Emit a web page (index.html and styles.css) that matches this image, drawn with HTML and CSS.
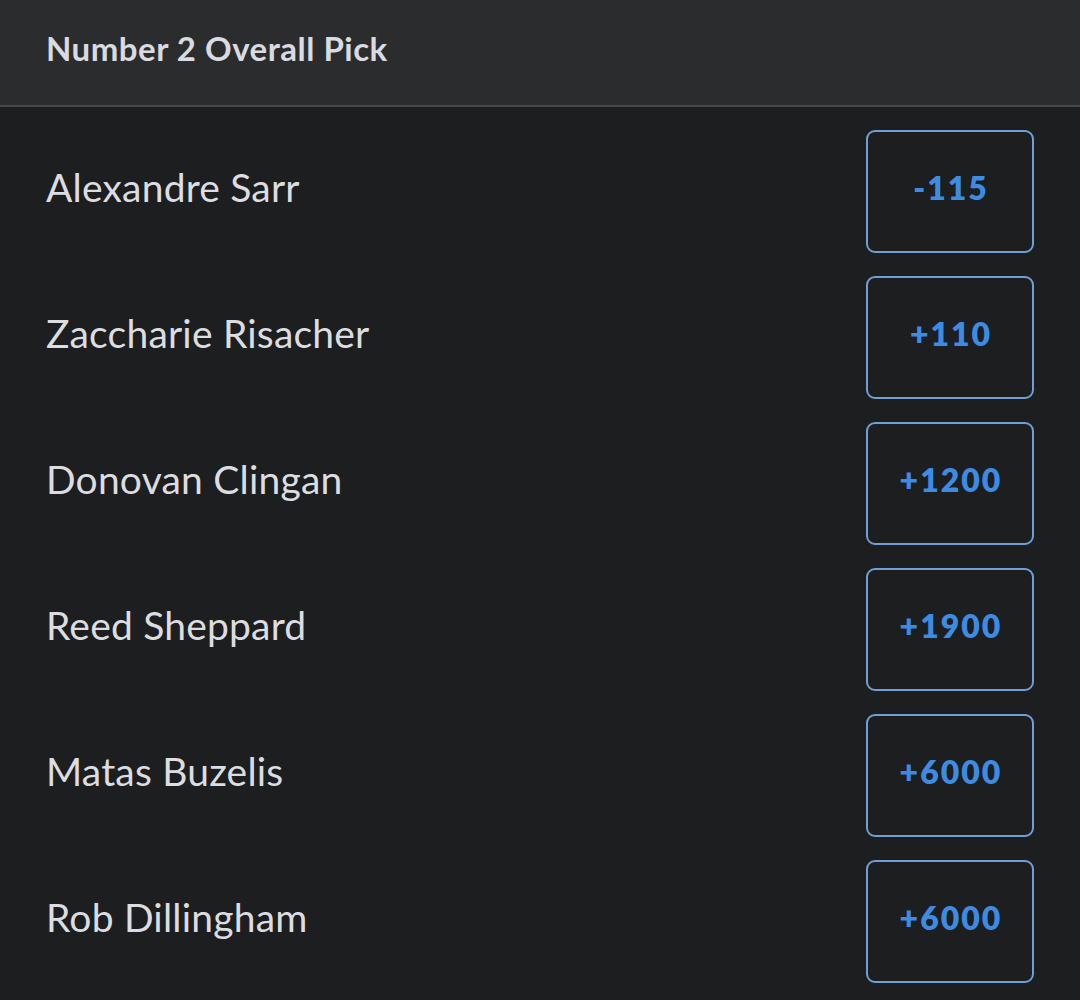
FILE: index.html
```html
<!DOCTYPE html>
<html>
<head>
<meta charset="utf-8">
<link rel="stylesheet" href="styles.css">
</head>
<body>
<div class="panel">
  <div class="header">Number 2 Overall Pick</div>
  <div class="list">
    <div class="row"><span class="name">Alexandre Sarr</span><button class="odds">-115</button></div>
    <div class="row"><span class="name">Zaccharie Risacher</span><button class="odds">+110</button></div>
    <div class="row"><span class="name">Donovan Clingan</span><button class="odds">+1200</button></div>
    <div class="row"><span class="name">Reed Sheppard</span><button class="odds">+1900</button></div>
    <div class="row"><span class="name">Matas Buzelis</span><button class="odds">+6000</button></div>
    <div class="row"><span class="name">Rob Dillingham</span><button class="odds">+6000</button></div>
  </div>
</div>
</body>
</html>
```

FILE: styles.css
```css
html, body {
  margin: 0;
  padding: 0;
  background: #1d1e1f;
  font-family: Lato, "Open Sans", sans-serif;
}
.panel {
  width: 1080px;
  height: 1000px;
  overflow: hidden;
}
.header {
  height: 107px;
  box-sizing: border-box;
  background: #2b2c2e;
  border-bottom: 2px solid #46474a;
  display: flex;
  align-items: center;
  padding: 0 46px 10px;
  color: #d9dbe0;
  font-size: 33px;
  font-weight: 700;
  letter-spacing: 0.5px;
}
.list {
  display: flex;
  flex-direction: column;
  gap: 24px;
  padding: 23px 46px 0 46px;
}
.row {
  display: flex;
  align-items: center;
  justify-content: space-between;
  height: 122px;
}
.name {
  color: #dcdde0;
  font-size: 39px;
  font-weight: 400;
  letter-spacing: 0.2px;
  margin-top: -8px;
}
.odds {
  width: 168px;
  height: 123px;
  box-sizing: border-box;
  border: 2px solid #6f9fd6;
  border-radius: 9px;
  background: #1d1e1f;
  color: #3d8ce2;
  font-family: Lato, sans-serif;
  font-size: 32px;
  font-weight: 800;
  letter-spacing: 2px;
  padding: 0 0 8px 2px;
}
```
